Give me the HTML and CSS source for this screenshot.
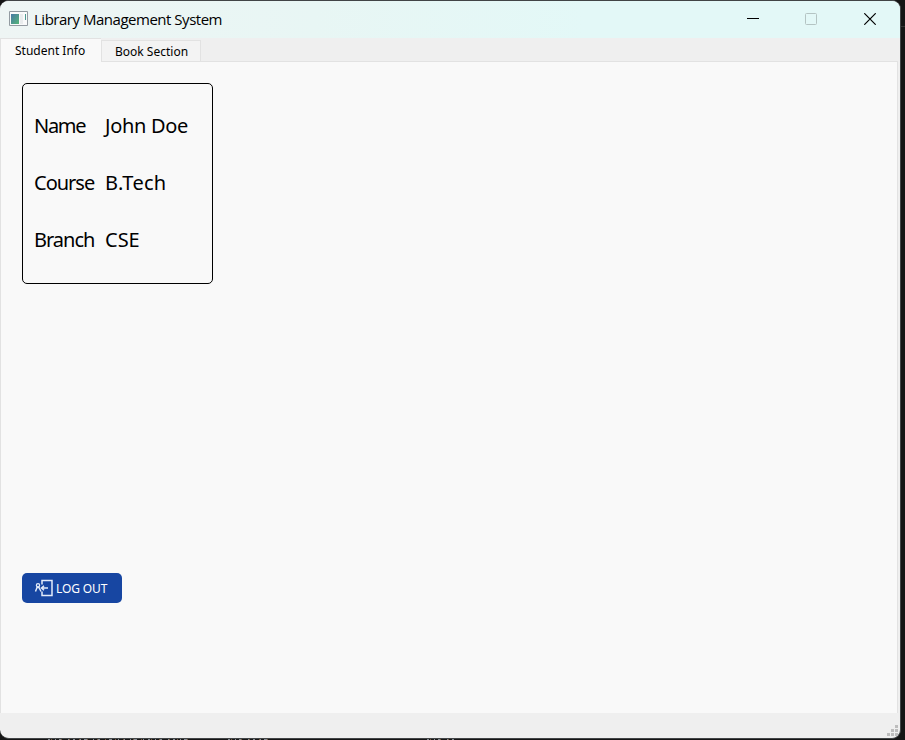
FILE: index.html
```html
<!DOCTYPE html>
<html lang="en">
<head>
<meta charset="utf-8">
<title>Library Management System</title>
<link rel="stylesheet" href="styles.css">
</head>
<body>
<svg class="desktop" width="905" height="740" shape-rendering="crispEdges" aria-hidden="true">
  <path d="M901 26.500h4" stroke="#333"/>
  <path d="M48 739.500H188M228 739.500H271M427 739.500H458" stroke="#858b91" stroke-dasharray="2 5 1 3 3 6 1 4"/>
  <path d="M51 739.500H188M231 739.500H271M430 739.500H458" stroke="#75573d" stroke-dasharray="1 9 1 7"/>
</svg>
<main class="window">
  <header class="titlebar">
    <svg class="app-icon" width="19" height="15" viewBox="0 0 19 15">
      <defs><linearGradient id="g" x1="0" y1="0" x2="1" y2="1"><stop stop-color="#4779a5"/><stop offset="1" stop-color="#55b578"/></linearGradient></defs>
      <path d="M.5.5h18v14H.5z" fill="#f9fafa" stroke="#939ba1"/>
      <path d="M2 3h8v10H2z" fill="url(#g)"/>
      <path d="M11 3h3v10h-3z" fill="#e9eced"/>
      <path d="M16 3h1v6h-1z" fill="#4d9b91"/>
    </svg>
    <h1 class="title">Library Management System</h1>
    <div class="controls">
      <svg width="12" height="12"><path d="M0 5.500h12" stroke="#000"/></svg>
      <svg width="12" height="12"><rect x=".5" y=".5" width="11" height="11" rx="1" fill="none" stroke="#b4c4c3"/></svg>
      <svg class="close" width="12" height="12"><path d="M.3.3 11.700 11.700M11.700.3.3 11.700" stroke="#000" stroke-width="1.200"/></svg>
    </div>
  </header>
  <nav class="tabs">
    <span class="tab active">Student Info</span>
    <span class="tab">Book Section</span>
  </nav>
  <section class="page">
    <dl class="card">
      <dt class="name">Name</dt><dd class="john">John Doe</dd>
      <dt>Course</dt><dd class="btech">B.Tech</dd>
      <dt>Branch</dt><dd>CSE</dd>
    </dl>
    <button class="logout">
      <svg width="19" height="18" viewBox="0 0 19 18" fill="none" stroke="#e4ecfa">
        <path d="M8 5.500V1.500h10v15H8V12.500" stroke-width="1.500"/>
        <circle cx="4" cy="6.300" r="1.600" stroke-width="1.300"/>
        <path d="M1.500 12.500 3 8.500h2l2 4" stroke-width="1.400"/>
        <path d="M14 9H7.500M10 6.800 7.500 9l2.500 2.200" stroke-width="1.500"/>
      </svg>
      <span>LOG OUT</span>
    </button>
  </section>
  <footer class="statusbar">
    <svg width="11" height="11" fill="#bdbdbd" shape-rendering="crispEdges"><path d="M8 0h3v3H8zM4 4h3v3H4zM8 4h3v3H8zM0 8h3v3H0zM4 8h3v3H4zM8 8h3v3H8z"/></svg>
  </footer>
</main>
</body>
</html>
```

FILE: styles.css
```css
* { box-sizing: border-box; }
body { margin: 0; width: 905px; height: 740px; overflow: hidden; background: #151515; color: #000; font-family: "Noto Sans", sans-serif; }
.desktop { position: absolute; inset: 0; }
.window { position: relative; width: 901px; height: 739px; border: solid #414446; border-width: 1px 1px 1px 0; border-radius: 9px; overflow: hidden; display: flex; flex-direction: column; background: #efefef; }
.titlebar { height: 37px; flex: none; display: flex; align-items: center; padding: 0 24px 2px 9px; background: linear-gradient(90deg, #eef5f4 0, #e8f6f4 35%, #e3f8f7 65%); }
.app-icon { margin-right: 6px; }
.title { margin: 0; font: 15px/20px "Open Sans", sans-serif; letter-spacing: -.48px; white-space: nowrap; }
.controls { margin-left: auto; display: flex; gap: 46px; }
.close { margin-left: 1px; }
.tabs { height: 24px; flex: none; display: flex; align-items: flex-end; position: relative; z-index: 1; margin-bottom: -1px; font-size: 12px; }
.tab { width: 100px; height: 22px; padding-left: 13px; border: 1px solid #e2e2e2; line-height: 22px; white-space: nowrap; background: #f3f3f3; }
.tab.active { width: 101px; height: 24px; padding-left: 14px; border-right: 0; border-bottom: 0; line-height: 23px; background: #f9f9f9; }
.page { width: 898px; height: 652px; flex: none; padding: 21px; border: 1px solid #e2e2e2; border-bottom: 0; background: #f9f9f9; }
.card { margin: 0 0 289px; width: 191px; height: 201px; border: 1px solid #000; border-radius: 5px; padding: 13px 11px 16px; display: grid; grid-template-columns: 71px 1fr; grid-template-rows: repeat(3, 57px); align-items: center; font-size: 20px; white-space: nowrap; }
.card dt { letter-spacing: -1px; }
.card .name { letter-spacing: -1.300px; }
.card dd { margin: 0; }
.card .john { letter-spacing: -.3px; }
.card .btech { letter-spacing: .3px; }
.logout { width: 100px; height: 30px; padding: 0 0 0 12px; border: 0; border-radius: 5px; background: #1746a2; color: #fff; display: flex; align-items: center; gap: 3px; font: 12px "Noto Sans", sans-serif; letter-spacing: -.12px; white-space: nowrap; }
.statusbar { flex: 1; display: flex; justify-content: flex-end; align-items: flex-end; padding: 0 2px 2px 0; }
```
